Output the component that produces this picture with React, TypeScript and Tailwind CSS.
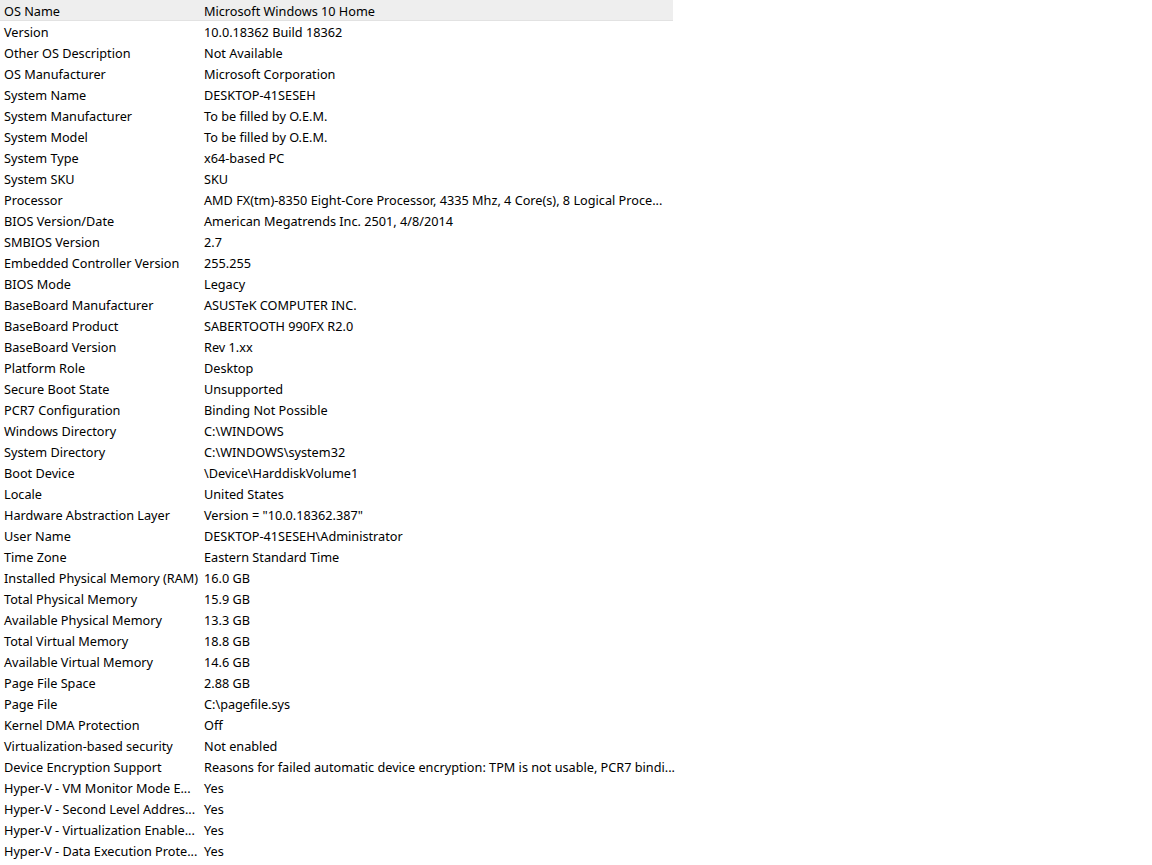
import React from "react";

// label / value pairs, as the list shows them (long entries cut with "...")
const rows: [string, string][] = [
  ["OS Name", "Microsoft Windows 10 Home"],
  ["Version", "10.0.18362 Build 18362"],
  ["Other OS Description", "Not Available"],
  ["OS Manufacturer", "Microsoft Corporation"],
  ["System Name", "DESKTOP-41SESEH"],
  ["System Manufacturer", "To be filled by O.E.M."],
  ["System Model", "To be filled by O.E.M."],
  ["System Type", "x64-based PC"],
  ["System SKU", "SKU"],
  ["Processor", "AMD FX(tm)-8350 Eight-Core Processor, 4335 Mhz, 4 Core(s), 8 Logical Proce..."],
  ["BIOS Version/Date", "American Megatrends Inc. 2501, 4/8/2014"],
  ["SMBIOS Version", "2.7"],
  ["Embedded Controller Version", "255.255"],
  ["BIOS Mode", "Legacy"],
  ["BaseBoard Manufacturer", "ASUSTeK COMPUTER INC."],
  ["BaseBoard Product", "SABERTOOTH 990FX R2.0"],
  ["BaseBoard Version", "Rev 1.xx"],
  ["Platform Role", "Desktop"],
  ["Secure Boot State", "Unsupported"],
  ["PCR7 Configuration", "Binding Not Possible"],
  ["Windows Directory", "C:\\WINDOWS"],
  ["System Directory", "C:\\WINDOWS\\system32"],
  ["Boot Device", "\\Device\\HarddiskVolume1"],
  ["Locale", "United States"],
  ["Hardware Abstraction Layer", 'Version = "10.0.18362.387"'],
  ["User Name", "DESKTOP-41SESEH\\Administrator"],
  ["Time Zone", "Eastern Standard Time"],
  ["Installed Physical Memory (RAM)", "16.0 GB"],
  ["Total Physical Memory", "15.9 GB"],
  ["Available Physical Memory", "13.3 GB"],
  ["Total Virtual Memory", "18.8 GB"],
  ["Available Virtual Memory", "14.6 GB"],
  ["Page File Space", "2.88 GB"],
  ["Page File", "C:\\pagefile.sys"],
  ["Kernel DMA Protection", "Off"],
  ["Virtualization-based security", "Not enabled"],
  ["Device Encryption Support", "Reasons for failed automatic device encryption: TPM is not usable, PCR7 bindi..."],
  ["Hyper-V - VM Monitor Mode E...", "Yes"],
  ["Hyper-V - Second Level Addres...", "Yes"],
  ["Hyper-V - Virtualization Enable...", "Yes"],
  ["Hyper-V - Data Execution Prote...", "Yes"],
];

export default function App() {
  return (
    <div className="w-[1152px] h-[865px] bg-white overflow-hidden font-['Noto_Sans',sans-serif] text-[12.7px] text-black">
      <div className="w-[673px]">
        {rows.map(([name, value], i) => (
          <div
            key={name}
            className={
              i === 0
                ? "flex h-[21px] items-center pt-[3px] bg-[#eeeeee] shadow-[inset_0_-1px_0_#e2e2e2]"
                : "flex h-[21px] items-center pt-[3px]"
            }
          >
            <div className="w-[200px] shrink-0 pl-1 whitespace-nowrap">{name}</div>
            <div className="pl-1 whitespace-nowrap">{value}</div>
          </div>
        ))}
      </div>
    </div>
  );
}
